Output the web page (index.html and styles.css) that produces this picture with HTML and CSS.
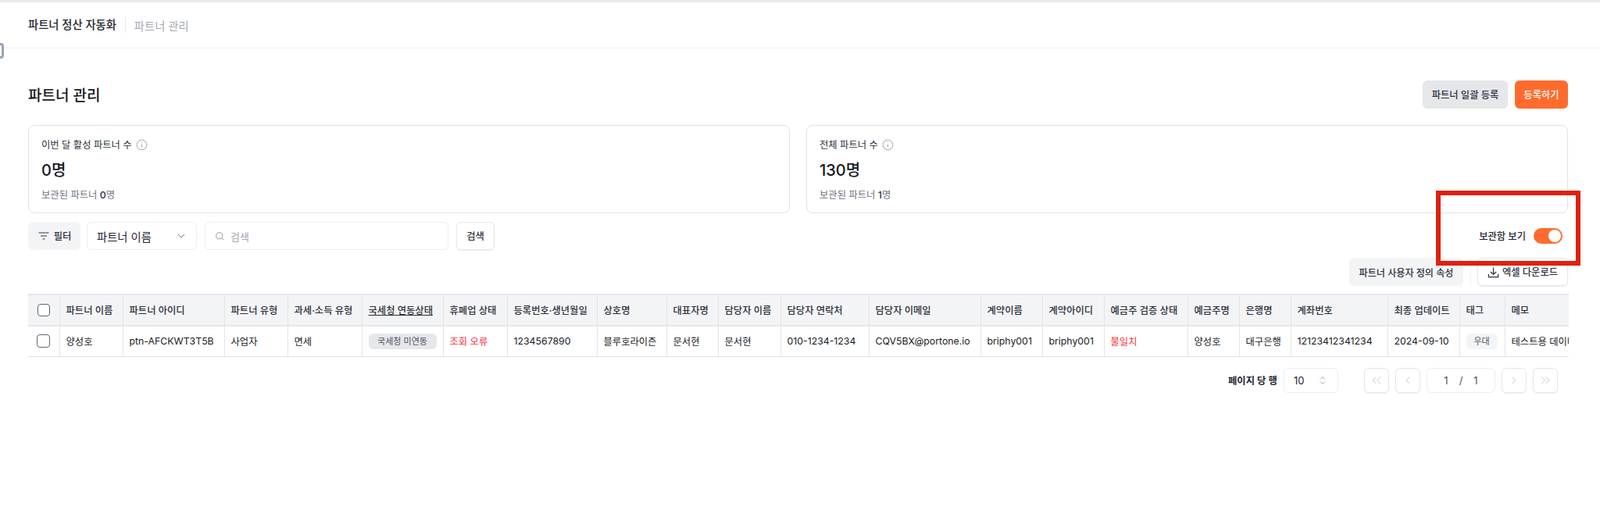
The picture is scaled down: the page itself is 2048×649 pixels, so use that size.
FILE: index.html
```html
<!DOCTYPE html>
<html lang="ko">
<head>
  <meta charset="UTF-8">
  <title>파트너 관리</title>
  <link rel="stylesheet" href="styles.css">
</head>
<body>
  <span class="side-handle"></span>
  <header class="topbar">
    <span class="crumb-main">파트너 정산 자동화</span>
    <span class="crumb-sub">파트너 관리</span>
  </header>

  <main class="page">
    <div class="title-row">
      <h1>파트너 관리</h1>
      <div class="actions">
        <button class="btn btn-gray">파트너 일괄 등록</button>
        <button class="btn btn-orange">등록하기</button>
      </div>
    </div>

    <div class="cards">
      <section class="card">
        <div class="card-label">이번 달 활성 파트너 수
          <svg class="info" viewBox="0 0 16 16"><circle cx="8" cy="8" r="6.8"/><path d="M8 7.2v4M8 4.6v.8"/></svg>
        </div>
        <div class="card-value">0명</div>
        <div class="card-sub">보관된 파트너 <b>0</b>명</div>
      </section>
      <section class="card">
        <div class="card-label">전체 파트너 수
          <svg class="info" viewBox="0 0 16 16"><circle cx="8" cy="8" r="6.8"/><path d="M8 7.2v4M8 4.6v.8"/></svg>
        </div>
        <div class="card-value">130명</div>
        <div class="card-sub">보관된 파트너 <b>1</b>명</div>
      </section>
    </div>

    <div class="filter-row">
      <button class="btn btn-filter">
        <svg class="filter-icon" viewBox="0 0 16 16"><path d="M1.500 4h13M4 8h8M6.500 12h3"/></svg>
        필터
      </button>
      <div class="select-box">
        <span>파트너 이름</span>
        <svg class="chev" viewBox="0 0 12 12"><path d="M2 4l4 4 4-4"/></svg>
      </div>
      <div class="search-box">
        <svg class="search-icon" viewBox="0 0 14 14"><circle cx="6.200" cy="6.200" r="4.400"/><path d="M9.600 9.600l2.600 2.600"/></svg>
        <span>검색</span>
      </div>
      <button class="btn btn-white btn-search">검색</button>
      <div class="archive">
        <span>보관함 보기</span>
        <span class="toggle"><span class="knob"></span></span>
      </div>
    </div>

    <div class="tool-row">
      <button class="btn btn-light">파트너 사용자 정의 속성</button>
      <span class="tool-divider"></span>
      <button class="btn btn-white btn-excel">
        <svg class="dl-icon" viewBox="0 0 16 16"><path d="M8 1.500v9.500M4 7.500L8 11l4-3.500M1.500 10.500V14.500h13v-4"/></svg>
        엑셀 다운로드
      </button>
    </div>

    <div class="table-wrap">
      <table>
        <colgroup>
          <col class="w40"><col class="w81"><col class="w130"><col class="w81"><col class="w95">
          <col class="w104"><col class="w82"><col class="w115"><col class="w89"><col class="w66">
          <col class="w80"><col class="w113"><col class="w143"><col class="w79"><col class="w79">
          <col class="w107"><col class="w66"><col class="w66"><col class="w124"><col class="w92">
          <col class="w58"><col class="w120">
        </colgroup>
        <thead>
          <tr>
            <th class="check"><span class="cb"></span></th>
            <th>파트너 이름</th>
            <th>파트너 아이디</th>
            <th>파트너 유형</th>
            <th>과세·소득 유형</th>
            <th><u>국세청 연동상태</u></th>
            <th>휴폐업 상태</th>
            <th>등록번호·생년월일</th>
            <th>상호명</th>
            <th>대표자명</th>
            <th>담당자 이름</th>
            <th>담당자 연락처</th>
            <th>담당자 이메일</th>
            <th>계약이름</th>
            <th>계약아이디</th>
            <th>예금주 검증 상태</th>
            <th>예금주명</th>
            <th>은행명</th>
            <th>계좌번호</th>
            <th>최종 업데이트</th>
            <th>태그</th>
            <th>메모</th>
          </tr>
        </thead>
        <tbody>
          <tr>
            <td class="check"><span class="cb cb-row"></span></td>
            <td>양성호</td>
            <td>ptn-AFCKWT3T5B</td>
            <td>사업자</td>
            <td>면세</td>
            <td><span class="chip chip-gray">국세청 미연동</span></td>
            <td class="red">조회 오류</td>
            <td>1234567890</td>
            <td>블루호라이즌</td>
            <td>문서현</td>
            <td>문서현</td>
            <td>010-1234-1234</td>
            <td>CQV5BX@portone.io</td>
            <td>briphy001</td>
            <td>briphy001</td>
            <td class="red">불일치</td>
            <td>양성호</td>
            <td>대구은행</td>
            <td>12123412341234</td>
            <td>2024-09-10</td>
            <td><span class="chip chip-light">우대</span></td>
            <td>테스트용 데이터</td>
          </tr>
        </tbody>
      </table>
    </div>

    <div class="pager">
      <span class="pager-label">페이지 당 행</span>
      <div class="page-size">
        <span>10</span>
        <svg class="updown" viewBox="0 0 10 16"><path d="M2 6.500l3-3 3 3M2 9.500l3 3 3-3"/></svg>
      </div>
      <div class="pager-nav">
        <button class="page-btn"><svg viewBox="0 0 16 16"><path d="M7.500 3.500L3 8l4.500 4.500M13 3.500L8.500 8l4.500 4.500"/></svg></button>
        <button class="page-btn"><svg viewBox="0 0 16 16"><path d="M10 4L6 8l4 4"/></svg></button>
        <div class="page-input"><span>1</span><i>/</i><span>1</span></div>
        <button class="page-btn"><svg viewBox="0 0 16 16"><path d="M6 4l4 4-4 4"/></svg></button>
        <button class="page-btn"><svg viewBox="0 0 16 16"><path d="M3 3.500L7.500 8 3 12.500M8.500 3.500L13 8l-4.500 4.500"/></svg></button>
      </div>
    </div>
  </main>

  <div class="red-box"></div>
</body>
</html>
```

FILE: styles.css
```css
* {
  box-sizing: border-box;
}
body {
  margin: 0;
  height: 649px;
  overflow: hidden;
  background: #fff;
  color: #1f2430;
  font-family: Inter, "Noto Sans CJK KR", sans-serif;
  font-size: 13px;
  border-top: 3px solid #e8e8ea;
}
button {
  font-family: inherit;
}
.side-handle {
  position: absolute;
  left: -6px;
  top: 55px;
  width: 11px;
  height: 20px;
  border: 3px solid #9aa3b5;
  border-radius: 4px;
  background: #fff;
}

/* top bar */
.topbar {
  height: 59px;
  padding-left: 36px;
  display: flex;
  align-items: center;
  border-bottom: 1px solid #eceef2;
}
.crumb-main {
  font-size: 14.300px;
  font-weight: 500;
  padding-right: 11px;
  border-right: 1px solid #e5e7eb;
  line-height: 20px;
}
.crumb-sub {
  font-size: 14.300px;
  color: #a3a9b3;
  padding-left: 11px;
}

.page {
  padding: 41px 41px 0 36px;
}
.title-row {
  display: flex;
  justify-content: space-between;
  align-items: center;
  height: 36px;
}
h1 {
  margin: 0;
  padding-bottom: 2px;
  font-size: 19px;
  font-weight: 500;
  color: #16191f;
}
.actions {
  display: flex;
  gap: 9px;
}

/* buttons */
.btn {
  height: 36px;
  border: none;
  border-radius: 6px;
  font-size: 12.300px;
  font-weight: 500;
  color: #2a2f3a;
  display: flex;
  align-items: center;
  justify-content: center;
  padding: 0;
}
.btn-gray {
  width: 109px;
  background: #e5e7eb;
}
.btn-orange {
  width: 68px;
  background: #ff6b2c;
  color: #fff;
}
.btn-light {
  width: 146px;
  font-size: 12.100px;
  background: #f3f4f6;
}
.btn-white {
  background: #fff;
  border: 1px solid #e5e7eb;
  box-shadow: 0 1px 1px rgba(0, 0, 0, 0.08);
}
.btn-filter {
  width: 67px;
  background: #f3f4f6;
  gap: 5px;
}
.btn-search {
  width: 49px;
  margin-left: 10px;
}
.btn-excel {
  width: 116px;
  gap: 4px;
}

/* summary cards */
.cards {
  display: grid;
  grid-template-columns: 975px 975px;
  gap: 21px;
  margin-top: 21px;
}
.card {
  height: 113px;
  border: 1px solid #e0e2e7;
  border-radius: 8px;
  padding: 15px 16px 0;
}
.card-label {
  display: flex;
  align-items: center;
  gap: 5px;
  height: 18px;
  font-size: 12.300px;
  color: #2a2f3a;
}
.info {
  width: 15px;
  height: 15px;
  fill: none;
  stroke: #9aa1ac;
  stroke-width: 1;
}
.card-value {
  margin-top: 11px;
  height: 26px;
  line-height: 26px;
  font-size: 20px;
  font-weight: 500;
  color: #16191f;
}
.card-sub {
  margin-top: 10px;
  font-size: 12.300px;
  line-height: 18px;
  color: #6b7280;
}
.card-sub b {
  font-weight: 500;
  color: #2a2f3a;
}

/* filter row */
.filter-row {
  display: flex;
  align-items: center;
  margin-top: 11px;
  height: 36px;
}
.filter-icon {
  width: 16px;
  height: 16px;
  fill: none;
  stroke: #333842;
  stroke-width: 1.200;
}
.select-box {
  width: 141px;
  height: 36px;
  margin-left: 8px;
  padding: 0 13px 0 12px;
  border: 1px solid #eceef1;
  border-radius: 6px;
  display: flex;
  align-items: center;
  justify-content: space-between;
  font-size: 14.300px;
}
.chev {
  width: 12px;
  height: 12px;
  fill: none;
  stroke: #6b7280;
  stroke-width: 1;
}
.search-box {
  width: 312px;
  height: 36px;
  margin-left: 10px;
  padding-left: 12px;
  border: 1px solid #eceef1;
  border-radius: 6px;
  display: flex;
  align-items: center;
  gap: 7px;
  color: #a3a9b3;
}
.search-icon {
  width: 13px;
  height: 13px;
  fill: none;
  stroke: #8b929d;
  stroke-width: 1;
}
.archive {
  margin-left: auto;
  display: flex;
  align-items: center;
  gap: 10px;
  padding-right: 7px;
  font-size: 12.300px;
  font-weight: 500;
}
.toggle {
  width: 37px;
  height: 20px;
  border-radius: 10px;
  background: #ff6b2c;
  display: flex;
  justify-content: flex-end;
  align-items: center;
  padding-right: 2px;
}
.knob {
  width: 16px;
  height: 16px;
  border-radius: 50%;
  background: #fff;
}

.tool-row {
  display: flex;
  justify-content: flex-end;
  align-items: center;
  margin-top: 10px;
}
.tool-divider {
  width: 1px;
  height: 36px;
  margin: 0 8px 0 9px;
  background: #f0f1f4;
}
.dl-icon {
  width: 15px;
  height: 15px;
  fill: none;
  stroke: #2a2f3a;
  stroke-width: 1.300;
}

/* table */
.table-wrap {
  margin-top: 10px;
  width: 1972px;
  overflow: hidden;
}
table {
  table-layout: fixed;
  width: 2010px;
  border-collapse: collapse;
  font-size: 12.300px;
}
.w40 { width: 40px; }
.w58 { width: 58px; }
.w66 { width: 66px; }
.w79 { width: 79px; }
.w80 { width: 80px; }
.w81 { width: 81px; }
.w82 { width: 82px; }
.w89 { width: 89px; }
.w92 { width: 92px; }
.w95 { width: 95px; }
.w104 { width: 104px; }
.w107 { width: 107px; }
.w113 { width: 113px; }
.w115 { width: 115px; }
.w120 { width: 120px; }
.w124 { width: 124px; }
.w130 { width: 130px; }
.w143 { width: 143px; }
th, td {
  padding: 0 8px;
  text-align: left;
  white-space: nowrap;
  overflow: hidden;
  border-right: 1px solid #e2e4e9;
}
th:last-child, td:last-child {
  border-right: none;
}
th {
  height: 40px;
  background: #f3f4f6;
  font-weight: 500;
  color: #2a2f3a;
  border-top: 2px solid #e5e7eb;
  border-bottom: 2px solid #e5e7eb;
}
td {
  height: 39px;
  border-bottom: 1px solid #e2e4e9;
  color: #171b24;
}
.check {
  text-align: center;
}
.cb {
  display: inline-block;
  width: 16px;
  height: 16px;
  border: 1px solid #5f6672;
  border-radius: 4px;
  background: #fff;
  vertical-align: middle;
}
.cb-row {
  width: 17px;
  height: 17px;
}
.red {
  color: #fb2c36;
}
.chip {
  display: inline-block;
  height: 20px;
  line-height: 20px;
  border-radius: 6px;
  font-size: 11px;
  text-align: center;
}
.chip-gray {
  width: 87px;
  background: #e5e7eb;
  color: #4b5563;
}
.chip-light {
  width: 40px;
  background: #f3f4f6;
  color: #4b5563;
}

/* pagination */
.pager {
  display: flex;
  align-items: center;
  margin-top: 14px;
  padding-left: 1536px;
}
.pager-label {
  width: 71px;
  font-size: 12.300px;
  font-weight: 600;
}
.page-size {
  width: 70px;
  height: 32px;
  padding: 0 14px 0 12px;
  border: 1px solid #eceef1;
  border-radius: 6px;
  display: flex;
  align-items: center;
  justify-content: space-between;
}
.updown {
  width: 10px;
  height: 16px;
  fill: none;
  stroke: #9aa1ac;
  stroke-width: 1;
}
.pager-nav {
  display: flex;
  align-items: center;
  gap: 8px;
  margin-left: 33px;
}
.page-btn {
  width: 32px;
  height: 32px;
  padding: 0;
  border: 1px solid #e5e7eb;
  border-radius: 6px;
  background: #fff;
  box-shadow: 0 1px 1px rgba(0, 0, 0, 0.06);
  display: flex;
  align-items: center;
  justify-content: center;
}
.page-btn svg {
  width: 16px;
  height: 16px;
  fill: none;
  stroke: #c5c9d0;
  stroke-width: 1;
}
.page-input {
  width: 88px;
  height: 32px;
  border: 1px solid #eceef1;
  border-radius: 6px;
  display: flex;
  align-items: center;
  justify-content: center;
  gap: 14px;
  color: #4b5563;
}
.page-input i {
  font-style: normal;
}

/* annotation drawn over the screenshot */
.red-box {
  position: absolute;
  left: 1838px;
  top: 244px;
  width: 185px;
  height: 96px;
  border: 6px solid #e0200f;
}
```
